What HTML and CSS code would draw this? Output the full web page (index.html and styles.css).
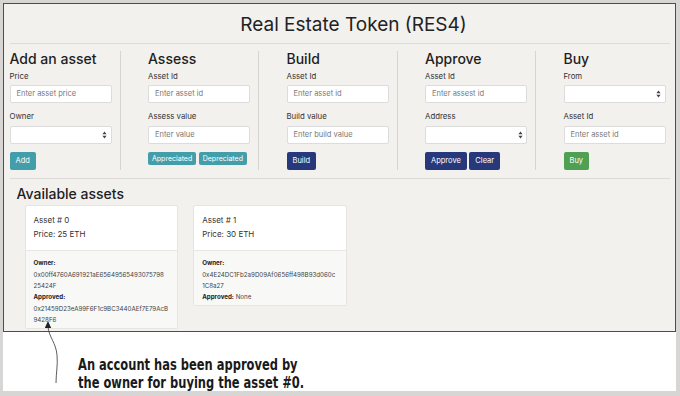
FILE: index.html
```html
<!DOCTYPE html>
<html>
<head>
<meta charset="utf-8">
<link rel="stylesheet" href="styles.css">
</head>
<body>
<div class="figure">
  <div class="shot">
    <div class="title">Real Estate Token (RES4)</div>
    <div class="forms">
      <div class="col">
        <h2>Add an asset</h2>
        <div class="label">Price</div>
        <div class="input">Enter asset price</div>
        <div class="label">Owner</div>
        <div class="input select"><svg class="caret" width="5" height="8" viewBox="0 0 5 8"><path d="M2.5 0.5 L4.6 3.2 L0.4 3.2 Z M2.5 7.5 L4.6 4.8 L0.4 4.8 Z" fill="#444"/></svg></div>
        <div class="btns"><span class="btn teal">Add</span></div>
      </div>
      <div class="col">
        <h2>Assess</h2>
        <div class="label">Asset Id</div>
        <div class="input">Enter asset id</div>
        <div class="label">Assess value</div>
        <div class="input">Enter value</div>
        <div class="btns"><span class="btn teal small">Appreciated</span><span class="btn teal small">Depreciated</span></div>
      </div>
      <div class="col">
        <h2>Build</h2>
        <div class="label">Asset Id</div>
        <div class="input">Enter asset id</div>
        <div class="label">Build value</div>
        <div class="input">Enter build value</div>
        <div class="btns"><span class="btn navy">Build</span></div>
      </div>
      <div class="col">
        <h2>Approve</h2>
        <div class="label">Asset Id</div>
        <div class="input">Enter assest id</div>
        <div class="label">Address</div>
        <div class="input select"><svg class="caret" width="5" height="8" viewBox="0 0 5 8"><path d="M2.5 0.5 L4.6 3.2 L0.4 3.2 Z M2.5 7.5 L4.6 4.8 L0.4 4.8 Z" fill="#444"/></svg></div>
        <div class="btns"><span class="btn navy">Approve</span><span class="btn navy">Clear</span></div>
      </div>
      <div class="col">
        <h2>Buy</h2>
        <div class="label">From</div>
        <div class="input select"><svg class="caret" width="5" height="8" viewBox="0 0 5 8"><path d="M2.5 0.5 L4.6 3.2 L0.4 3.2 Z M2.5 7.5 L4.6 4.8 L0.4 4.8 Z" fill="#444"/></svg></div>
        <div class="label">Asset Id</div>
        <div class="input">Enter asset id</div>
        <div class="btns"><span class="btn green">Buy</span></div>
      </div>
    </div>
    <div class="assets">
      <h2 class="avail">Available assets</h2>
      <div class="cards">
        <div class="card">
          <div class="card-head">
            <div>Asset # 0</div>
            <div>Price: 25 ETH</div>
          </div>
          <div class="card-foot">
            <div><b>Owner:</b></div>
            <div>0x00ff4760A691921aE65649565493075798</div>
            <div>25424F</div>
            <div><b>Approved:</b></div>
            <div>0x21459D23eA99F6F1c9BC3440AEf7E79AcB</div>
            <div>9428F6</div>
          </div>
        </div>
        <div class="card">
          <div class="card-head">
            <div>Asset # 1</div>
            <div>Price: 30 ETH</div>
          </div>
          <div class="card-foot">
            <div><b>Owner:</b></div>
            <div>0x4E24DC1Fb2a9D09Af0656ff498B93d060c</div>
            <div>1C8a27</div>
            <div><b>Approved:</b> None</div>
          </div>
        </div>
      </div>
    </div>
  </div>
  <div class="note">
    <div class="note-line">An account has been approved by</div>
    <div class="note-line">the owner for buying the asset #0.</div>
  </div>
  <svg class="arrow" width="40" height="70" viewBox="0 0 40 70">
    <path d="M4 6 C 5 16, 12 22, 13 34 C 14 44, 12 52, 12 62" fill="none" stroke="#333" stroke-width="0.8"/>
    <path d="M4 0 L7.2 7 L0.8 7 Z" fill="#222"/>
  </svg>
</div>
</body>
</html>
```
FILE: styles.css
```css
html, body {
  margin: 0;
  padding: 0;
}
body {
  width: 680px;
  height: 396px;
  background: #d8d5d5;
  font-family: Inter, "Liberation Sans", sans-serif;
  color: #222;
  overflow: hidden;
}
.figure {
  position: relative;
  margin: 3px 0 0 3px;
  width: 673px;
  height: 388px;
  background: #ffffff;
}
.shot {
  box-sizing: border-box;
  height: 329px;
  border: 1.5px solid #4d4d4d;
  background: #f2f1ee;
  padding: 0 5.5px;
}
.title {
  height: 38.5px;
  line-height: 41px;
  font-size: 19px;
  text-align: center;
  padding-left: 28px;
  border-bottom: 1px solid #dddbd7;
}
.forms {
  display: flex;
  padding: 7.7px 0 8px;
  border-bottom: 1px solid #dddbd7;
}
.col {
  width: 102px;
  flex: 0 0 102px;
}
.col + .col {
  border-left: 1px solid #d6d5d2;
  margin-left: 8px;
  padding-left: 27.5px;
}
h2 {
  margin: 0;
  font-size: 14px;
  line-height: 15px;
  font-weight: 500;
  color: #1e1e1e;
}
.label {
  font-size: 7.8px;
  line-height: 10px;
  margin: 5px 0 4px;
  color: #333;
}
.input + .label {
  margin-top: 8px;
  margin-bottom: 4.6px;
}
.input {
  box-sizing: border-box;
  position: relative;
  height: 18px;
  background: #fff;
  border: 1px solid #dcdcdc;
  border-radius: 2px;
  font-size: 7.5px;
  line-height: 16px;
  padding-left: 6px;
  color: #777;
}
.caret {
  position: absolute;
  right: 3.5px;
  top: 4px;
}
.btns {
  display: flex;
  gap: 2.5px;
  margin-top: 8.4px;
}
.btn {
  display: block;
  height: 17.6px;
  line-height: 17.6px;
  padding: 0 6px;
  font-size: 7.5px;
  color: #fff;
  border-radius: 2px;
}
.btn.small {
  height: 13.3px;
  line-height: 13.3px;
  padding: 0 4px;
  font-size: 7px;
}
.teal { background: #449eaa; }
.navy { background: #27397a; }
.green { background: #4fa052; }
.avail {
  margin: 7px 0 0 7px;
}
.cards {
  display: flex;
  align-items: flex-start;
  gap: 15.2px;
  margin: 4.7px 0 0 15px;
}
.card {
  box-sizing: border-box;
  width: 153.5px;
  background: #fff;
  border: 1px solid #e6e5e2;
  border-radius: 2px;
}
.card-head {
  padding: 6.5px 8px 7.8px;
  font-size: 8px;
  line-height: 14.5px;
  color: #333;
  border-bottom: 1px solid #e8e7e4;
}
.card-foot {
  background: #f8f8f7;
  padding: 6.5px 8px 2.5px;
  font-size: 6.2px;
  line-height: 11.4px;
  color: #444;
}
.card-foot b {
  color: #222;
  font-weight: 700;
}
.note {
  padding: 24px 0 0 75px;
  font-family: "DejaVu Sans Condensed", "DejaVu Sans", sans-serif;
  font-weight: bold;
  font-size: 15px;
  line-height: 18px;
  color: #1a1a1a;
}
.note-line {
  transform: scaleX(0.85);
  transform-origin: left center;
  white-space: nowrap;
}
.arrow {
  position: absolute;
  left: 41px;
  top: 318px;
}
```
